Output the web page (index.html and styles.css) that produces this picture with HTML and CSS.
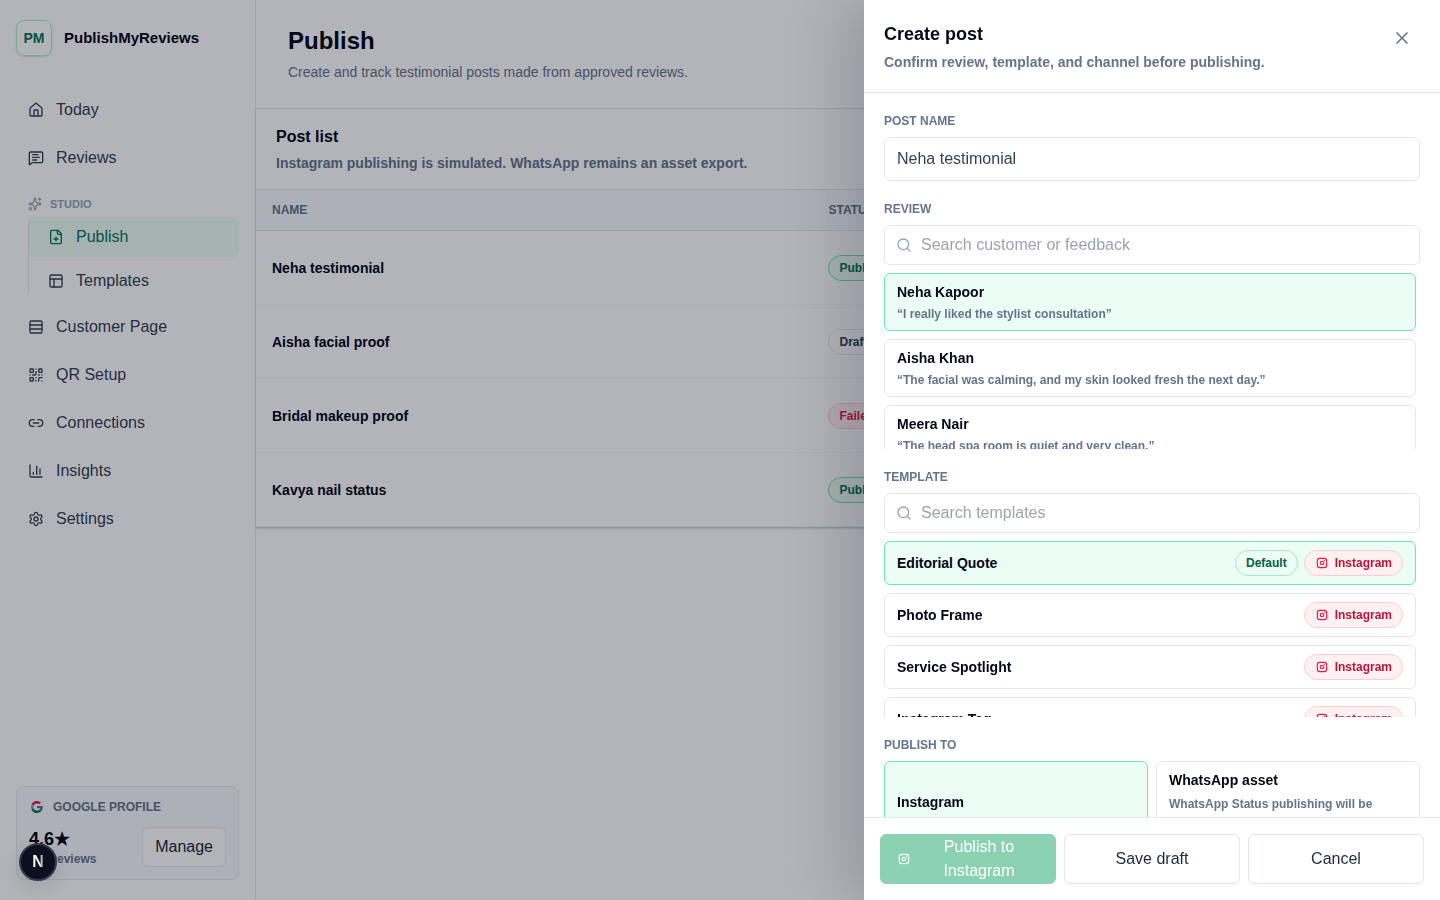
FILE: index.html
```html
<!DOCTYPE html>
<html lang="en">
<head>
    <meta charset="UTF-8">
    <meta name="viewport" content="width=device-width, initial-scale=1.0">
    <title>Publish - PublishMyReviews</title>
    <link rel="stylesheet" href="styles.css">
</head>
<body>

    <!-- shared icon shapes -->
    <svg class="sprite" aria-hidden="true">
        <symbol id="icon-instagram" viewBox="0 0 24 24">
            <rect x="4" y="4" width="16" height="16" rx="4" />
            <circle cx="12" cy="12" r="3" />
            <path d="M16.5 7.5v.01" />
        </symbol>
        <symbol id="icon-search" viewBox="0 0 24 24">
            <circle cx="11" cy="11" r="8" />
            <path d="m21 21-4.34-4.34" />
        </symbol>
    </svg>

    <div class="app">
        <aside class="sidebar">
            <div class="brand">
                <span class="brand-mark">PM</span>
                <span class="brand-name">PublishMyReviews</span>
            </div>

            <nav class="nav">
                <a class="nav-link" href="#">
                    <svg class="icon" viewBox="0 0 24 24"><path d="M15 21v-8a1 1 0 0 0-1-1h-4a1 1 0 0 0-1 1v8" /><path d="M3 10a2 2 0 0 1 .709-1.528l7-5.999a2 2 0 0 1 2.582 0l7 5.999A2 2 0 0 1 21 10v9a2 2 0 0 1-2 2H5a2 2 0 0 1-2-2z" /></svg>
                    Today
                </a>
                <a class="nav-link" href="#">
                    <svg class="icon" viewBox="0 0 24 24"><path d="M22 17a2 2 0 0 1-2 2H6.828a2 2 0 0 0-1.414.586l-2.202 2.202A.71.71 0 0 1 2 21.286V5a2 2 0 0 1 2-2h16a2 2 0 0 1 2 2z" /><path d="M7 11h10M7 15h6M7 7h8" /></svg>
                    Reviews
                </a>

                <div class="nav-group">
                    <div class="nav-heading">
                        <svg class="icon icon-sm" viewBox="0 0 24 24"><path d="M11.017 2.814a1 1 0 0 1 1.966 0l1.051 5.558a2 2 0 0 0 1.594 1.594l5.558 1.051a1 1 0 0 1 0 1.966l-5.558 1.051a2 2 0 0 0-1.594 1.594l-1.051 5.558a1 1 0 0 1-1.966 0l-1.051-5.558a2 2 0 0 0-1.594-1.594l-5.558-1.051a1 1 0 0 1 0-1.966l5.558-1.051a2 2 0 0 0 1.594-1.594z" /><path d="M20 2v4M22 4h-4" /><circle cx="4" cy="20" r="2" /></svg>
                        STUDIO
                    </div>
                    <div class="nav-sub">
                        <a class="nav-link active" href="#">
                            <svg class="icon" viewBox="0 0 24 24"><path d="M15 2H6a2 2 0 0 0-2 2v16a2 2 0 0 0 2 2h12a2 2 0 0 0 2-2V7Z" /><path d="M14 2v4a2 2 0 0 0 2 2h4M9 15h6M12 18v-6" /></svg>
                            Publish
                        </a>
                        <a class="nav-link" href="#">
                            <svg class="icon" viewBox="0 0 24 24"><rect x="3" y="3" width="18" height="18" rx="2" /><path d="M3 9h18M9 21V9" /></svg>
                            Templates
                        </a>
                    </div>
                </div>

                <a class="nav-link" href="#">
                    <svg class="icon" viewBox="0 0 24 24"><rect x="3" y="3" width="18" height="18" rx="2" /><path d="M21 9H3M21 15H3" /></svg>
                    Customer Page
                </a>
                <a class="nav-link" href="#">
                    <svg class="icon" viewBox="0 0 24 24"><rect x="3" y="3" width="5" height="5" rx="1" /><rect x="16" y="3" width="5" height="5" rx="1" /><rect x="3" y="16" width="5" height="5" rx="1" /><path d="M21 16h-3a2 2 0 0 0-2 2v3M21 21v.01M12 7v3a2 2 0 0 1-2 2H7M3 12h.01M12 3h.01M12 16v.01M16 12h1M21 12v.01M12 21v-1" /></svg>
                    QR Setup
                </a>
                <a class="nav-link" href="#">
                    <svg class="icon" viewBox="0 0 24 24"><path d="M9 17H7A5 5 0 0 1 7 7h2M15 7h2a5 5 0 1 1 0 10h-2M8 12h8" /></svg>
                    Connections
                </a>
                <a class="nav-link" href="#">
                    <svg class="icon" viewBox="0 0 24 24"><path d="M3 3v16a2 2 0 0 0 2 2h16M18 17V9M13 17V5M8 17v-3" /></svg>
                    Insights
                </a>
                <a class="nav-link" href="#">
                    <svg class="icon" viewBox="0 0 24 24"><path d="M9.671 4.136a2.34 2.34 0 0 1 4.659 0 2.34 2.34 0 0 0 3.319 1.915 2.34 2.34 0 0 1 2.33 4.033 2.34 2.34 0 0 0 0 3.831 2.34 2.34 0 0 1-2.33 4.033 2.34 2.34 0 0 0-3.319 1.915 2.34 2.34 0 0 1-4.659 0 2.34 2.34 0 0 0-3.32-1.915 2.34 2.34 0 0 1-2.33-4.033 2.34 2.34 0 0 0 0-3.831A2.34 2.34 0 0 1 6.35 6.051a2.34 2.34 0 0 0 3.319-1.915" /><circle cx="12" cy="12" r="3" /></svg>
                    Settings
                </a>
            </nav>

            <div class="profile">
                <div class="profile-title">
                    <svg class="google" viewBox="0 0 24 24">
                        <path fill="#64748b" d="M20.6 12.2c0-.6-.1-1.200-.2-1.800H12v3.500h4.800a4.100 4.100 0 0 1-1.800 2.700v2.300h2.900c1.700-1.600 2.700-3.900 2.700-6.700z" />
                        <path fill="#047857" d="M12 21c2.400 0 4.500-.8 6-2.200l-3-2.300a5.400 5.400 0 0 1-8.100-2.800H3.900V16A9 9 0 0 0 12 21z" />
                        <path fill="#94a3b8" d="M6.900 13.700a5.400 5.400 0 0 1 0-3.400V8h-3a9 9 0 0 0 0 8z" />
                        <path fill="#e11d48" d="M12 6.600c1.300 0 2.500.5 3.400 1.300L18 5.300A9 9 0 0 0 3.900 8l3 2.300A5.400 5.400 0 0 1 12 6.600z" />
                    </svg>
                    GOOGLE PROFILE
                </div>
                <div class="profile-row">
                    <div>
                        <div class="rating">4.6★</div>
                        <div class="rating-count">128 reviews</div>
                    </div>
                    <button class="btn" type="button">Manage</button>
                </div>
            </div>
        </aside>

        <main class="main">
            <header class="page-header">
                <h1>Publish</h1>
                <p>Create and track testimonial posts made from approved reviews.</p>
            </header>

            <section class="posts">
                <div class="posts-header">
                    <h2>Post list</h2>
                    <p>Instagram publishing is simulated. WhatsApp remains an asset export.</p>
                </div>
                <table class="posts-table">
                    <thead>
                        <tr><th class="col-name">NAME</th><th>STATUS</th></tr>
                    </thead>
                    <tbody>
                        <tr><td>Neha testimonial</td><td><span class="pill pill-green">Published</span></td></tr>
                        <tr><td>Aisha facial proof</td><td><span class="pill">Draft</span></td></tr>
                        <tr><td>Bridal makeup proof</td><td><span class="pill pill-red">Failed</span></td></tr>
                        <tr><td>Kavya nail status</td><td><span class="pill pill-green">Published</span></td></tr>
                    </tbody>
                </table>
            </section>
        </main>
    </div>

    <div class="backdrop"></div>

    <div class="drawer" role="dialog" aria-labelledby="drawer-title">
        <header class="drawer-header">
            <div>
                <h2 id="drawer-title">Create post</h2>
                <p>Confirm review, template, and channel before publishing.</p>
            </div>
            <button class="close" type="button" aria-label="Close">
                <svg class="icon icon-lg" viewBox="0 0 24 24"><path d="M18 6 6 18M6 6l12 12" /></svg>
            </button>
        </header>

        <div class="drawer-body">
            <div class="field">
                <label for="postName">POST NAME</label>
                <input class="text-input" type="text" id="postName" value="Neha testimonial">
            </div>

            <div class="field">
                <label for="reviewSearch">REVIEW</label>
                <div class="search">
                    <svg class="icon"><use href="#icon-search" /></svg>
                    <input type="text" id="reviewSearch" placeholder="Search customer or feedback">
                </div>
                <div class="options">
                    <button class="option selected" type="button">
                        <span class="option-name">Neha Kapoor</span>
                        <span class="option-text">“I really liked the stylist consultation”</span>
                    </button>
                    <button class="option" type="button">
                        <span class="option-name">Aisha Khan</span>
                        <span class="option-text">“The facial was calming, and my skin looked fresh the next day.”</span>
                    </button>
                    <button class="option" type="button">
                        <span class="option-name">Meera Nair</span>
                        <span class="option-text">“The head spa room is quiet and very clean.”</span>
                    </button>
                </div>
            </div>

            <div class="field">
                <label for="templateSearch">TEMPLATE</label>
                <div class="search">
                    <svg class="icon"><use href="#icon-search" /></svg>
                    <input type="text" id="templateSearch" placeholder="Search templates">
                </div>
                <div class="options">
                    <button class="option option-row selected" type="button">
                        <span class="option-name">Editorial Quote</span>
                        <span class="pill pill-default">Default</span>
                        <span class="pill pill-instagram"><svg class="icon icon-sm"><use href="#icon-instagram" /></svg>Instagram</span>
                    </button>
                    <button class="option option-row" type="button">
                        <span class="option-name">Photo Frame</span>
                        <span class="pill pill-instagram"><svg class="icon icon-sm"><use href="#icon-instagram" /></svg>Instagram</span>
                    </button>
                    <button class="option option-row" type="button">
                        <span class="option-name">Service Spotlight</span>
                        <span class="pill pill-instagram"><svg class="icon icon-sm"><use href="#icon-instagram" /></svg>Instagram</span>
                    </button>
                    <button class="option option-row" type="button">
                        <span class="option-name">Instagram Tag</span>
                        <span class="pill pill-instagram"><svg class="icon icon-sm"><use href="#icon-instagram" /></svg>Instagram</span>
                    </button>
                </div>
            </div>

            <div class="field">
                <div class="field-title">PUBLISH TO</div>
                <div class="channels">
                    <button class="option channel selected" type="button">
                        <span class="option-name">Instagram</span>
                    </button>
                    <button class="option channel" type="button">
                        <span class="option-name">WhatsApp asset</span>
                        <span class="option-text">WhatsApp Status publishing will be available later.</span>
                    </button>
                </div>
            </div>
        </div>

        <footer class="drawer-footer">
            <button class="btn btn-primary" type="button" disabled>
                <svg class="icon icon-sm"><use href="#icon-instagram" /></svg>
                <span>Publish to Instagram</span>
            </button>
            <button class="btn" type="button">Save draft</button>
            <button class="btn" type="button">Cancel</button>
        </footer>
    </div>

    <button class="dev-badge" type="button" aria-label="Open dev tools"><span>N</span></button>

</body>
</html>
```
FILE: styles.css
```css
* {
    box-sizing: border-box;
}
body {
    margin: 0;
    font-family: "Liberation Sans", Arial, Helvetica, sans-serif;
    font-size: 16px;
    line-height: 24px;
    color: #020617;
    background-color: #fff;
    overflow: hidden;
}
h1, h2, p {
    margin: 0;
}
button, input {
    font: inherit;
    color: inherit;
}
button {
    cursor: pointer;
}
.sprite {
    display: none;
}
.icon {
    flex: none;
    width: 16px;
    height: 16px;
    fill: none;
    stroke: currentColor;
    stroke-width: 2;
    stroke-linecap: round;
    stroke-linejoin: round;
}
.icon-lg {
    width: 20px;
    height: 20px;
}
.icon-sm {
    width: 14px;
    height: 14px;
}

/* Sidebar */
.app {
    display: flex;
    min-height: 100vh;
}
.sidebar {
    display: flex;
    flex-direction: column;
    flex: none;
    width: 256px;
    padding: 20px 16px;
    border-right: 1px solid #e2e8f0;
}
.brand {
    display: flex;
    align-items: center;
    gap: 12px;
}
.brand-mark {
    display: flex;
    align-items: center;
    justify-content: center;
    width: 36px;
    height: 36px;
    border: 1px solid #a7f3d0;
    border-radius: 8px;
    color: #047857;
    font-size: 14px;
    font-weight: bold;
    box-shadow: 0 1px 2px rgba(0, 0, 0, 0.15);
}
.brand-name {
    font-size: 15px;
    font-weight: bold;
}
.nav {
    display: flex;
    flex-direction: column;
    gap: 8px;
    margin-top: 34px;
}
.nav-link {
    display: flex;
    align-items: center;
    gap: 12px;
    height: 40px;
    padding: 0 12px;
    border-radius: 6px;
    color: #334155;
    text-decoration: none;
}
.nav-link.active {
    background-color: #ecfdf5;
    color: #047857;
}
.nav-group {
    padding-top: 10px;
    margin-bottom: -2px;
}
.nav-heading {
    display: flex;
    align-items: center;
    gap: 8px;
    height: 16px;
    margin-bottom: 5px;
    padding-left: 12px;
    color: #94a3b8;
    font-size: 11px;
    font-weight: bold;
}
.nav-sub {
    position: relative;
    display: flex;
    flex-direction: column;
    gap: 4px;
    padding-left: 12px;
}
.nav-sub::before {
    content: "";
    position: absolute;
    top: 4px;
    bottom: 8px;
    left: 12px;
    width: 1px;
    background-color: #e2e8f0;
}
.nav-sub .nav-link {
    padding-left: 20px;
}
.profile {
    margin-top: auto;
    padding: 12px;
    border: 1px solid #e2e8f0;
    border-radius: 8px;
    background-color: #f8fafc;
}
.profile-title {
    display: flex;
    align-items: center;
    gap: 8px;
    height: 16px;
    color: #64748b;
    font-size: 12px;
    font-weight: bold;
}
.google {
    width: 16px;
    height: 16px;
}
.profile-row {
    display: flex;
    align-items: center;
    justify-content: space-between;
    margin-top: 12px;
}
.rating {
    font-size: 18px;
    font-weight: bold;
}
.rating-count {
    color: #64748b;
    font-size: 12px;
    font-weight: bold;
    line-height: 16px;
}
.btn {
    min-height: 40px;
    padding: 0 12px;
    border: 1px solid #e2e8f0;
    border-radius: 6px;
    background-color: #fff;
    color: #1e293b;
}

/* Post list */
.main {
    flex: 1;
}
.page-header {
    padding: 24px 32px 26px;
    border-bottom: 1px solid #e2e8f0;
}
.page-header h1 {
    font-size: 24px;
    line-height: 34px;
}
.page-header p {
    margin-top: 4px;
    color: #64748b;
    font-size: 14px;
    line-height: 20px;
}
.posts {
    border-bottom: 1px solid #cbd5e1;
    box-shadow: 0 1px 2px rgba(15, 23, 42, 0.15);
}
.posts-header {
    padding: 16px 20px;
    border-bottom: 1px solid #e2e8f0;
}
.posts-header h2 {
    font-size: 16px;
    line-height: 24px;
}
.posts-header p {
    margin-top: 4px;
    color: #64748b;
    font-size: 14px;
    font-weight: bold;
    line-height: 20px;
}
.posts-table {
    width: 100%;
    border-collapse: separate;
    border-spacing: 0;
    font-size: 14px;
    font-weight: bold;
}
.posts-table th {
    height: 41px;
    padding: 0 16px;
    border-bottom: 1px solid #e2e8f0;
    background-color: #f8fafc;
    color: #64748b;
    font-size: 12px;
    text-align: left;
}
.posts-table td {
    height: 74px;
    padding: 0 16px;
    border-bottom: 1px solid #f1f5f9;
}
.col-name {
    width: 47%;
}
.pill {
    display: inline-flex;
    align-items: center;
    gap: 6px;
    height: 26px;
    padding: 0 10px;
    border: 1px solid #e2e8f0;
    border-radius: 13px;
    color: #334155;
    font-size: 12px;
    font-weight: bold;
    vertical-align: middle;
}
.pill-green {
    border-color: #6ee7b7;
    background-color: #ecfdf5;
    color: #047857;
}
.pill-red {
    border-color: #fecdd3;
    background-color: #fff1f2;
    color: #e11d48;
}
.pill-default {
    border-color: #a7e8cd;
    background-color: #ecfdf5;
    color: #065f46;
}
.pill-instagram {
    border-color: #fecdd3;
    background-color: #fff1f2;
    color: #be123c;
}
.pill-instagram .icon {
    color: #e11d48;
}

/* Create post drawer */
.backdrop {
    position: fixed;
    inset: 0;
    background-color: rgba(2, 6, 23, 0.3);
}
.drawer {
    position: fixed;
    top: 0;
    right: 0;
    bottom: 0;
    display: flex;
    flex-direction: column;
    width: 576px;
    max-width: 100%;
    background-color: #fff;
    box-shadow: -16px 0 60px rgba(2, 6, 23, 0.18);
}
.drawer-header {
    display: flex;
    align-items: flex-start;
    justify-content: space-between;
    padding: 20px;
    border-bottom: 1px solid #e2e8f0;
}
.drawer-header h2 {
    font-size: 18px;
    line-height: 28px;
}
.drawer-header p {
    margin-top: 4px;
    color: #64748b;
    font-size: 14px;
    font-weight: bold;
    line-height: 20px;
}
.close {
    display: flex;
    align-items: center;
    justify-content: center;
    width: 36px;
    height: 36px;
    padding: 0;
    border: none;
    border-radius: 6px;
    background: none;
    color: #64748b;
}
.drawer-body {
    display: flex;
    flex: 1;
    flex-direction: column;
    gap: 20px;
    min-height: 0;
    padding: 20px;
    overflow-y: auto;
    scrollbar-width: none;
}
.field {
    display: flex;
    flex: none;
    flex-direction: column;
    gap: 8px;
}
.field label, .field-title {
    color: #64748b;
    font-size: 12px;
    font-weight: bold;
    line-height: 16px;
}
.text-input, .search {
    width: 100%;
    padding: 0 12px;
    border: 1px solid #e2e8f0;
    border-radius: 6px;
    background-color: #fff;
}
.text-input {
    height: 44px;
    color: #334155;
}
.search {
    display: flex;
    align-items: center;
    gap: 9px;
    height: 40px;
    padding-left: 11px;
    color: #94a3b8;
}
.search input {
    flex: 1;
    min-width: 0;
    padding: 0;
    border: none;
    outline: none;
    background: none;
    color: #334155;
}
.search input::placeholder {
    color: #9ca3af;
}
.options {
    display: flex;
    flex-direction: column;
    gap: 8px;
    height: 176px;
    padding-right: 4px;
    overflow-y: auto;
    scrollbar-width: none;
}
.option {
    display: flex;
    flex: none;
    flex-direction: column;
    gap: 4px;
    padding: 8px 12px;
    border: 1px solid #e2e8f0;
    border-radius: 6px;
    background-color: #fff;
    text-align: left;
}
.option.selected {
    border-color: #6ee7b7;
    background-color: #ecfdf5;
}
.option-row {
    flex-direction: row;
    align-items: center;
    gap: 6px;
}
.option-row .option-name {
    flex: 1;
}
.option-name {
    font-size: 14px;
    font-weight: bold;
    line-height: 20px;
}
.option-text {
    color: #64748b;
    font-size: 12px;
    font-weight: bold;
    line-height: 16px;
}
.channels {
    display: grid;
    grid-template-columns: 1fr 1fr;
    gap: 8px;
}
.channel {
    justify-content: center;
}
.channel .option-text {
    line-height: 20px;
}
.drawer-footer {
    display: grid;
    grid-template-columns: repeat(3, 1fr);
    gap: 8px;
    padding: 16px;
    border-top: 1px solid #e2e8f0;
}
.btn-primary {
    display: flex;
    align-items: center;
    gap: 8px;
    padding: 0 16px;
    border-color: #8bd2b3;
    background-color: #8bd2b3;
    color: #fff;
}
.btn-primary span {
    flex: 1;
}

/* Dev tools badge */
.dev-badge {
    position: fixed;
    bottom: 19px;
    left: 19px;
    width: 38px;
    height: 38px;
    padding: 0;
    border: 2px solid #343a4c;
    border-radius: 50%;
    background-color: #0b0f1e;
    font-size: 16px;
    font-weight: bold;
    line-height: 34px;
    box-shadow: 0 8px 20px rgba(0, 0, 0, 0.1);
}
.dev-badge span {
    background-image: linear-gradient(to right, #fff 60%, #6b7280);
    background-clip: text;
    color: transparent;
}
```
